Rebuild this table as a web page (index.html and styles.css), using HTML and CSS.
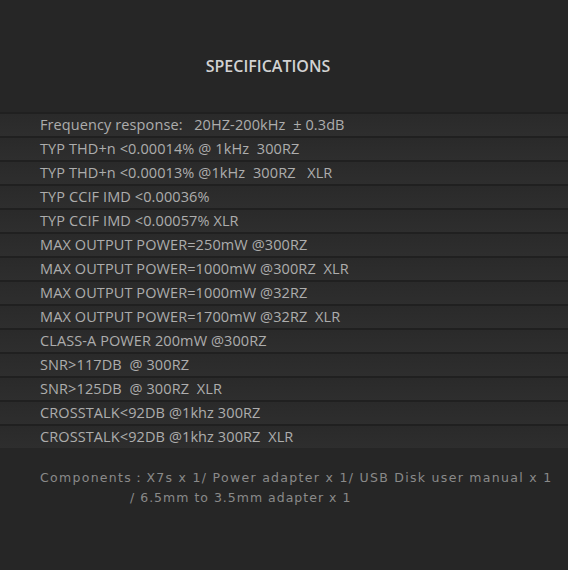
FILE: index.html
```html
<!DOCTYPE html>
<html>
<head>
<meta charset="utf-8">
<link rel="stylesheet" href="styles.css">
</head>
<body>
<div class="page">
  <h1 class="title">SPECIFICATIONS</h1>
  <ul class="specs">
    <li class="row">Frequency response:&nbsp;&nbsp; 20HZ-200kHz&nbsp; ± 0.3dB</li>
    <li class="row">TYP THD+n &lt;0.00014% @ 1kHz&nbsp; 300RZ</li>
    <li class="row">TYP THD+n &lt;0.00013% @1kHz&nbsp; 300RZ&nbsp;&nbsp; XLR</li>
    <li class="row">TYP CCIF IMD &lt;0.00036%</li>
    <li class="row">TYP CCIF IMD &lt;0.00057% XLR</li>
    <li class="row">MAX OUTPUT POWER=250mW @300RZ</li>
    <li class="row">MAX OUTPUT POWER=1000mW @300RZ&nbsp; XLR</li>
    <li class="row">MAX OUTPUT POWER=1000mW @32RZ</li>
    <li class="row">MAX OUTPUT POWER=1700mW @32RZ&nbsp; XLR</li>
    <li class="row">CLASS-A POWER 200mW @300RZ</li>
    <li class="row">SNR&gt;117DB&nbsp; @ 300RZ</li>
    <li class="row">SNR&gt;125DB&nbsp; @ 300RZ&nbsp; XLR</li>
    <li class="row">CROSSTALK&lt;92DB @1khz 300RZ</li>
    <li class="row">CROSSTALK&lt;92DB @1khz 300RZ&nbsp; XLR</li>
  </ul>
  <p class="components">Components：X7s x 1/ Power adapter x 1/ USB Disk user manual x 1<br><span class="indent">/ 6.5mm to 3.5mm adapter x 1</span></p>
</div>
</body>
</html>
```
FILE: styles.css
```css
html, body {
  margin: 0;
  padding: 0;
  background: #262626;
}
.page {
  width: 568px;
  height: 570px;
  background: #262626;
  overflow: hidden;
  font-family: "Open Sans", "Noto Sans", sans-serif;
}
.title {
  margin: 0;
  padding: 55px 32px 0 0;
  height: 112px;
  box-sizing: border-box;
  text-align: center;
  font-size: 16px;
  font-weight: 600;
  line-height: 22px;
  color: #d2d2d2;
  letter-spacing: 0;
}
.specs {
  list-style: none;
  margin: 0;
  padding: 0;
}
.row {
  height: 24px;
  box-sizing: border-box;
  padding-left: 40px;
  border-top: 2px solid #202020;
  background: linear-gradient(#2a2a2a, #2e2e2e);
  font-size: 14.5px;
  line-height: 22px;
  color: #adadad;
  letter-spacing: 0.1px;
  white-space: pre;
}
.components {
  margin: 0;
  padding: 20px 0 0 40px;
  font-family: "DejaVu Sans", sans-serif;
  font-size: 12.5px;
  line-height: 20px;
  color: #8a8a8a;
  letter-spacing: 1.3px;
}
.indent {
  padding-left: 90px;
  letter-spacing: 1px;
}
```
